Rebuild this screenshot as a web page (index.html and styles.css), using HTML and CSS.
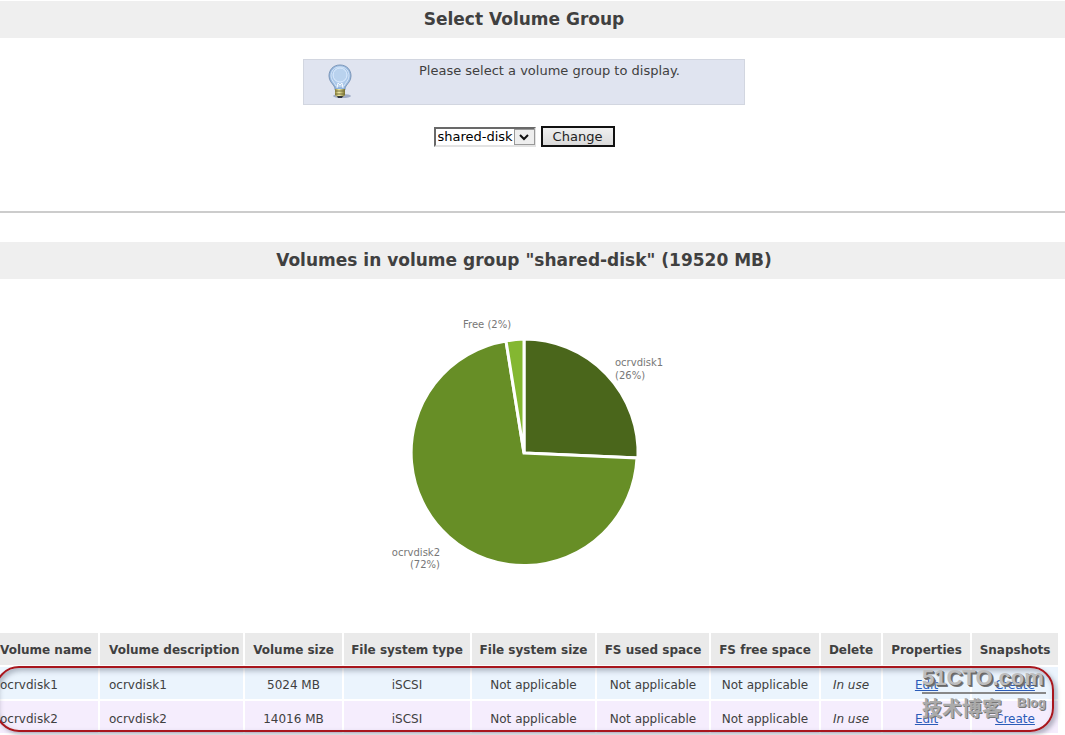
FILE: index.html
```html
<!DOCTYPE html>
<html lang="en">
<head>
    <meta charset="UTF-8">
    <meta name="viewport" content="width=device-width, initial-scale=1.0">
    <title>Volume Groups</title>
    <link rel="stylesheet" href="styles.css">
</head>
<body>
    <h2 class="title">Select Volume Group</h2>

    <div class="content">
        <div class="notice">
            <svg class="bulb" viewBox="0 0 30 38" aria-hidden="true">
                <defs>
                    <radialGradient id="glass" cx="50%" cy="45%" r="60%">
                        <stop offset="0" stop-color="#d3e6fa"/>
                        <stop offset="0.6" stop-color="#a9c6e8"/>
                        <stop offset="1" stop-color="#7fa6d3"/>
                    </radialGradient>
                    <linearGradient id="brass" x1="0" x2="1" y1="0" y2="0">
                        <stop offset="0" stop-color="#8f8538"/>
                        <stop offset="0.4" stop-color="#f6efae"/>
                        <stop offset="1" stop-color="#79702c"/>
                    </linearGradient>
                </defs>
                <ellipse cx="17" cy="33" rx="9" ry="2" fill="#7585aa" opacity="0.6"/>
                <path d="M15 2C8 2 4 7 4 13c0 5 3 7 5 10 1 2 1 3 1 4h10c0-1 0-2 1-4 2-3 5-5 5-10 0-6-4-11-11-11z" fill="url(#glass)" stroke="#7e98ba"/>
                <path d="M15 4C9 4 6 8 6 13c0 4 3 6 5 10h8c2-4 5-6 5-10 0-5-3-9-9-9z" fill="none" stroke="#d6e6f8"/>
                <circle cx="15" cy="12" r="7" fill="#b9d2ee" stroke="#dcecff"/>
                <path d="M12 25l1-5 2 2 2-2 1 5" fill="none" stroke="#f4f9ff"/>
                <path d="M10 26h10v6l-2 2h-6l-2-2z" fill="url(#brass)"/>
                <path d="M10 28h10M10 31h10" stroke="#777039"/>
                <path d="M12 33h6l-1 2h-4z" fill="#31363f"/>
            </svg>
            <p>Please select a volume group to display.</p>
        </div>

        <form class="group-form">
            <div class="select-box">
                <select name="group" aria-label="Volume group">
                    <option>shared-disk</option>
                </select>
                <span class="arrow">
                    <svg viewBox="0 0 10 8" width="10" height="8"><path d="M1 2l4 4 4-4" fill="none" stroke="#111" stroke-width="2"/></svg>
                </span>
            </div>
            <button type="button">Change</button>
        </form>
    </div>

    <hr>

    <h2 class="title">Volumes in volume group "shared-disk" (19520 MB)</h2>

    <div class="content">
        <svg class="chart" viewBox="0 0 300 270" width="300" height="270" role="img" aria-label="Volume usage">
            <g stroke="#fff" stroke-width="3">
                <path d="M150 143L150 29A114 114 0 0 1 264 148z" fill="#4a661b"/>
                <path d="M150 143L263 148A113 113 0 1 1 132 31z" fill="#678e26"/>
                <path d="M150 143L132 31A113 113 0 0 1 150 29z" fill="#84b731"/>
            </g>
            <g class="labels">
                <text x="89" y="18">Free (2%)</text>
                <text x="241" y="56">ocrvdisk1</text>
                <text x="241" y="69">(26%)</text>
                <text x="66" y="246" text-anchor="end">ocrvdisk2</text>
                <text x="66" y="258" text-anchor="end">(72%)</text>
            </g>
        </svg>
    </div>

    <div class="volumes">
        <table>
            <colgroup>
                <col class="c-name"><col class="c-desc"><col class="c-size"><col class="c-type"><col class="c-fssize">
                <col class="c-used"><col class="c-free"><col class="c-delete"><col class="c-props"><col class="c-snap">
            </colgroup>
            <thead>
                <tr>
                    <th>Volume name</th>
                    <th>Volume description</th>
                    <th>Volume size</th>
                    <th>File system type</th>
                    <th>File system size</th>
                    <th>FS used space</th>
                    <th>FS free space</th>
                    <th>Delete</th>
                    <th>Properties</th>
                    <th>Snapshots</th>
                </tr>
            </thead>
            <tbody>
                <tr class="odd">
                    <td>ocrvdisk1</td>
                    <td>ocrvdisk1</td>
                    <td>5024 MB</td>
                    <td>iSCSI</td>
                    <td>Not applicable</td>
                    <td>Not applicable</td>
                    <td>Not applicable</td>
                    <td><i>In use</i></td>
                    <td><a href="#">Edit</a></td>
                    <td><a href="#">Create</a></td>
                </tr>
                <tr class="even">
                    <td>ocrvdisk2</td>
                    <td>ocrvdisk2</td>
                    <td>14016 MB</td>
                    <td>iSCSI</td>
                    <td>Not applicable</td>
                    <td>Not applicable</td>
                    <td>Not applicable</td>
                    <td><i>In use</i></td>
                    <td><a href="#">Edit</a></td>
                    <td><a href="#">Create</a></td>
                </tr>
            </tbody>
        </table>
        <div class="highlight"></div>
        <div class="watermark">
            <div class="site">51CTO.com</div>
            <div class="sub"><span class="cn">技术博客</span><span class="blog">Blog</span></div>
        </div>
    </div>
</body>
</html>
```
FILE: styles.css
```css
* {
    margin: 0;
    padding: 0;
    box-sizing: border-box;
}

body {
    padding-top: 1px;
    background: #fff;
    color: #404040;
    font-family: Verdana, "DejaVu Sans", sans-serif;
    font-size: 12px;
    overflow-x: hidden;
}

.title {
    padding-right: 17px;
    background: #efefef;
    font-size: 17px;
    line-height: 37px;
    text-align: center;
}

.content {
    display: flex;
    flex-direction: column;
    align-items: center;
    padding-right: 17px;
}

.notice {
    display: flex;
    width: 442px;
    max-width: 100%;
    height: 46px;
    margin-top: 21px;
    background: #e0e4f0;
    border: 1px solid #d2d6e0;
}

.bulb {
    width: 30px;
    height: 38px;
    margin: 3px 0 0 21px;
}

.notice p {
    flex: 1;
    padding: 3px 52px 0;
    font-size: 13px;
    line-height: 16px;
    text-align: center;
    white-space: nowrap;
}

.group-form {
    display: flex;
    align-items: center;
    gap: 5px;
    margin-top: 21px;
}

.select-box {
    position: relative;
}

select {
    appearance: none;
    display: block;
    width: 102px;
    height: 20px;
    padding-left: 2px;
    background: #fff;
    border: 2px solid;
    border-color: #696969 #e3e3e3 #e3e3e3 #696969;
    border-radius: 0;
    color: #000;
    font-family: inherit;
    font-size: 13px;
}

.arrow {
    position: absolute;
    top: 2px;
    right: 1px;
    display: flex;
    align-items: center;
    justify-content: center;
    width: 21px;
    height: 16px;
    background: #eee;
    border: 1px solid #999;
    pointer-events: none;
}

button {
    width: 74px;
    height: 21px;
    background: linear-gradient(#f0f0f0, #dadada);
    border: 2px solid #111;
    color: #222;
    font-family: inherit;
    font-size: 13px;
    line-height: 16px;
}

hr {
    height: 2px;
    margin: 64px 0 29px;
    background: #ccc;
    border: none;
}

.chart {
    margin-top: 31px;
}

.labels {
    fill: #777;
    font-size: 10px;
}

.volumes {
    position: relative;
    margin-top: 53px;
    padding-right: 7px;
}

table {
    width: 100%;
    table-layout: fixed;
    border-spacing: 0;
}

.c-name { width: 100px; }
.c-desc { width: 145px; }
.c-size { width: 99px; }
.c-type { width: 128px; }
.c-fssize { width: 125px; }
.c-used { width: 114px; }
.c-free { width: 110px; }
.c-delete { width: 62px; }
.c-props { width: 89px; }
.c-snap { width: 86px; }

th, td {
    height: 34px;
    padding-top: 2px;
    border-right: 2px solid #fff;
    border-bottom: 2px solid #fff;
    line-height: 16px;
    text-align: center;
    white-space: nowrap;
}

th {
    background: #eaeaea;
}

th:first-child, td:first-child {
    text-align: left;
}

th:nth-child(2), td:nth-child(2) {
    padding-left: 9px;
    text-align: left;
}

td {
    padding-top: 4px;
}

th:last-child, td:last-child {
    border-right: none;
}

.odd td {
    background: #ebf4fd;
}

.even td {
    background: #f5edfd;
}

a {
    color: #2b5cb8;
}

/* red marker around the two rows */
.highlight {
    position: absolute;
    top: 33px;
    left: -5px;
    right: 11px;
    height: 66px;
    border: 2px solid #a8161d;
    border-radius: 24px;
    box-shadow: 3px 3px 4px rgba(60, 70, 90, 0.35), inset 2px 3px 5px rgba(60, 70, 90, 0.35);
    pointer-events: none;
}

.watermark {
    position: absolute;
    top: 30px;
    right: 19px;
    width: 124px;
    color: #bdbdbd;
    font-weight: bold;
    text-shadow: 1px 1px 0 #666, 2px 2px 0 #777;
    pointer-events: none;
}

.site {
    border-bottom: 2px solid #888;
    font-family: "Liberation Sans", Arial, sans-serif;
    font-size: 22px;
    line-height: 29px;
    white-space: nowrap;
}

.sub {
    display: flex;
    justify-content: space-between;
    color: #aaa;
    text-shadow: 1px 1px 0 #777;
}

.cn {
    font-family: "Noto Sans CJK SC", sans-serif;
    font-size: 20px;
    line-height: 27px;
}

.blog {
    font-family: "Liberation Sans", Arial, sans-serif;
    font-size: 13px;
    line-height: 18px;
}
```
